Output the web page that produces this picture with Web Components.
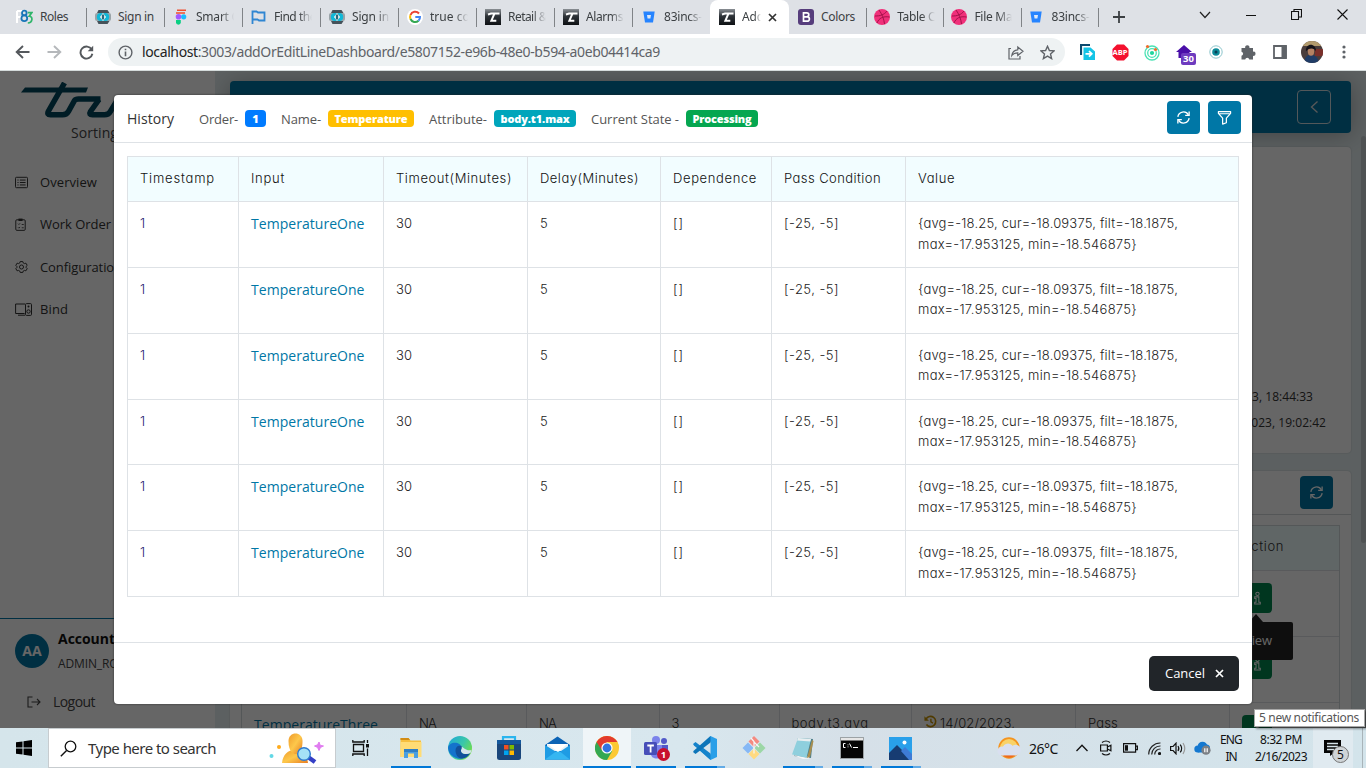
<!DOCTYPE html>
<html lang="en">
<head>
<meta charset="utf-8">
<title>Line Dashboard</title>
<style>
html,body{margin:0;height:100%;overflow:hidden}
body{font-family:"Open Sans","Noto Sans",sans-serif;font-size:13px;color:#222}
</style>
</head>
<body>
<desktop-screen></desktop-screen>
<script>
const svg=(w,h,vb,body)=>`<svg width="${w}" height="${h}" viewBox="${vb}" fill="none">${body}</svg>`;
const ICONS={
 f83:svg(17,16,'0 0 17 16','<path d="M1 2h5M1 2v12M1 8h4" stroke="#fff" stroke-width="2"/><circle cx="8.3" cy="4" r="2.3" stroke="#1976b8" stroke-width="1.8"/><circle cx="8.3" cy="9.3" r="2.9" stroke="#1976b8" stroke-width="1.8"/><path d="M11.8 3.6h4l-2.6 3.6c4 .3 3.6 6.6-1.4 6.8" stroke="#2fb56a" stroke-width="1.7"/>'),
 react:svg(16,16,'0 0 16 16','<rect x="0" y="4" width="16" height="8" rx="2" fill="#9aa3a8"/><path d="M3.500 1h9l2 3H2zM2 12h12.500l-2 3h-9z" fill="#46525a"/><circle cx="5.800" cy="8" r="4" fill="#10b8d8"/><circle cx="10.200" cy="8" r="4" fill="#10b8d8"/><path d="M8 4l3 4-3 4-3-4z" fill="#fff"/><path d="M6.8 5.500h2.400v5H6.800z" fill="#2a6a7c"/>'),
 figma:svg(12,16,'0 0 12 16','<path d="M2 .5h9v1.6H2zM1 3.3h9v1.4H1z" fill="#f04e2e"/><circle cx="3.5" cy="7.8" r="2.8" fill="#a259ff"/><circle cx="8.7" cy="7.8" r="2.6" fill="#1abcfe"/><path d="M1 11h4.8v2.3a2.4 2.4 0 0 1-4.8 0z" fill="#0acf83"/>'),
 flag:svg(15,15,'0 0 15 15','<path d="M1.5 14V1.5h4l1.5 1h6.5v8H8l-1.500-1h-5" stroke="#2f86d2" stroke-width="1.8"/>'),
 google:svg(16,16,'0 0 16 16','<circle cx="8" cy="8" r="8" fill="#fff"/><path d="M12 4.5A5 5 0 0 0 3.5 6" stroke="#ea4335" stroke-width="2"/><path d="M3.5 6a5 5 0 0 0 0 4" stroke="#fbbc05" stroke-width="2"/><path d="M3.500 10a5 5 0 0 0 8 1.700" stroke="#34a853" stroke-width="2"/><path d="M11.500 11.700A5 5 0 0 0 13 8H8.300" stroke="#4285f4" stroke-width="2"/>'),
 zed:svg(16,16,'0 0 16 16','<defs><linearGradient id="z" x2="0" y2="1"><stop stop-color="#8a8f94"/><stop offset=".45" stop-color="#2e3338"/><stop offset="1" stop-color="#0e1114"/></linearGradient></defs><path d="M0 0h16v16H0z" fill="url(#z)"/><path d="M3 5.500l3-1h8.500M9.500 4.500L6.300 11.800h5" stroke="#fff" stroke-width="1.900"/>'),
 bucket:svg(12,12,'0 0 12 12','<path d="M.3.500h11.400L10 11.500H2z" fill="#2684ff"/><path d="M4 4h4l-.6 3.500H4.600z" fill="#dee9f8"/>'),
 boot:svg(16,16,'0 0 16 16','<rect width="16" height="16" rx="3" fill="#563d7c"/><path d="M5.500 3.800h3.300a2 2 0 0 1 0 4H5.500zM5.500 7.800h3.700a2.200 2.200 0 0 1 0 4.400H5.500z" stroke="#fff" stroke-width="1.700"/>'),
 dribbble:svg(16,16,'0 0 16 16','<circle cx="8" cy="8" r="8" fill="#f0307a"/><path d="M1 7c5 0 9-1 12-5M5 1c3 4 5 9 5.500 14M3 14c2-5 6-7 12.500-6" stroke="#a3124a" stroke-width="1"/>'),
 x:svg(9,9,'0 0 9 9','<path d="M1 1l7 7M8 1L1 8" stroke="#333" stroke-width="1.700"/>'),
 plus:svg(12,12,'0 0 12 12','<path d="M6 0v12M0 6h12" stroke="#3c4043" stroke-width="1.800"/>'),
 chev:svg(12,8,'0 0 12 8','<path d="M1 1l5 5.500L11 1" stroke="#222" stroke-width="1.200"/>'),
 min:svg(10,10,'0 0 10 10','<path d="M0 5.500h10" stroke="#111"/>'),
 restore:svg(11,11,'0 0 11 11','<path d="M.5 2.500h7v8h-7zM3 2.500v-2h7.500v7.500H8" stroke="#111" stroke-width="1.100"/>'),
 close:svg(11,11,'0 0 11 11','<path d="M.5.500l10 10M10.500.500l-10 10" stroke="#111" stroke-width="1.100"/>'),
 back:svg(15,14,'0 0 15 14','<path d="M14.500 7H2M8 1L1.700 7 8 13" stroke="#54585c" stroke-width="1.900"/>'),
 fwd:svg(15,14,'0 0 15 14','<path d="M.5 7H13M7 1l6.300 6L7 13" stroke="#b5b8bb" stroke-width="1.900"/>'),
 reload:svg(15,15,'0 0 15 15','<path d="M12.700 4.500A6 6 0 1 0 13.400 8.800" stroke="#54585c" stroke-width="1.900"/><path d="M14.200.800v5.500H8.700z" fill="#54585c"/>'),
 info:svg(15,15,'0 0 15 15','<circle cx="7.500" cy="7.500" r="6.400" stroke="#5f6368" stroke-width="1.400"/><path d="M7.500 6.500v4.700M7.500 3.700v1.600" stroke="#5f6368" stroke-width="1.600"/>'),
 share:svg(16,15,'0 0 16 15','<path d="M3 3.500H1v10.500h11v-3" stroke="#5f6368" stroke-width="1.200"/><path d="M3.800 10.500c.5-4 3-5.500 6-5.700V2L15 6.300l-5.200 4.200V7.800c-2.500 0-4.500.7-6 2.700z" stroke="#5f6368" stroke-width="1.200"/>'),
 star:svg(15,15,'0 0 15 15','<path d="M7.500 1.300l1.900 4.200 4.600.400-3.500 3.100 1.100 4.600-4.100-2.500-4.100 2.500 1.100-4.600L1 5.900l4.600-.400z" stroke="#5f6368" stroke-width="1.400"/>'),
 ext1:svg(16,16,'0 0 16 16','<path d="M1 11V1h9" stroke="#0b4a6f" stroke-width="2.200"/><path d="M3.500 3.500h7l4.500 4V16H3.500z" fill="#14c4e6"/><path d="M5.500 9.800h6M9 7l2.800 2.800L9 12.600" stroke="#fff" stroke-width="1.700"/>'),
 oct:svg(17,17,'0 0 17 17','<path d="M5 .500h7L16.500 5v7L12 16.500H5L.500 12V5z" fill="#f4112e"/>'),
 target:svg(16,17,'0 0 16 17','<circle cx="8" cy="9" r="7" stroke="#4be2b4" stroke-width="1.300"/><circle cx="8" cy="9" r="4.300" stroke="#4be2b4" stroke-width="1.300"/><circle cx="8" cy="9" r="2.100" fill="#20d59c"/><circle cx="3.500" cy="2.500" r="1.600" fill="#f26b2a"/><circle cx="11.500" cy="5.500" r="1.600" fill="#f26b2a"/>'),
 home30:svg(16,14,'0 0 16 14','<path d="M8 0l8 7h-2.500v6h-11V7H0z" fill="#4a0fa8"/>'),
 eye:svg(14,14,'0 0 14 14','<circle cx="7" cy="7" r="6.200" stroke="#8cc5cc" stroke-width="1"/><circle cx="7" cy="7" r="3.800" fill="#0d8b99"/><circle cx="7" cy="7" r="1.500" fill="#073f55"/>'),
 puzzle:svg(16,16,'0 0 16 16','<path d="M1.500 4h3.700a2.200 2.200 0 1 1 4.200 0H13v3.700a2.100 2.100 0 1 1 0 4.100V15.500H9.300a2.100 2.100 0 0 0-4.100 0H1.500v-3.700a2.100 2.100 0 0 0 0-4.100z" fill="#5f6368"/>'),
 panel:svg(14,14,'0 0 14 14','<path d="M1 1h12v12H1z" stroke="#5f6368" stroke-width="1.800"/><path d="M8.500 1h5v12h-5z" fill="#5f6368"/>'),
 avatar:svg(22,22,'0 0 22 22','<defs><clipPath id="a"><circle cx="11" cy="11" r="11"/></clipPath></defs><g clip-path="url(#a)"><path d="M0 0h22v22H0z" fill="#4a3d3c"/><path d="M0 0h22v5H0z" fill="#b29a6c"/><path d="M14 8h8v7h-8z" fill="#7a2f2a"/><path d="M3 22c1-7 3-8 7-8s7 2 8 8z" fill="#203c66"/><ellipse cx="10" cy="10.500" rx="3.200" ry="4.200" fill="#b58263"/><path d="M5 10.500c-1-9 10.500-9 10 0-1-4-8-4-10 0z" fill="#15131a"/></g>'),
 dots:svg(4,14,'0 0 4 14','<g fill="#5f6368"><circle cx="2" cy="2" r="1.600"/><circle cx="2" cy="7" r="1.600"/><circle cx="2" cy="12" r="1.600"/></g>'),
 list:svg(13,13,'0 0 16 16','<rect x=".6" y="1.600" width="14.800" height="12.800" rx="1.200" stroke="currentColor" stroke-width="1.200"/><path d="M6 5h7M6 8h7M6 11h7M3 5h1.400M3 8h1.400M3 11h1.400" stroke="currentColor" stroke-width="1.200"/>'),
 clip:svg(11,13,'0 0 13 16','<rect x=".7" y="2.200" width="11.600" height="13" rx="1.300" stroke="currentColor" stroke-width="1.200"/><path d="M4 .700h5v3H4z" fill="currentColor"/><path d="M3.500 7l1 1 1.500-1.500M8 8h2.500M3.500 11.500l1 1 1.500-1.500M8 12h2.500" stroke="currentColor"/>'),
 gear:svg(13,14,'0 0 16 16','<circle cx="8" cy="8" r="2.500" stroke="currentColor" stroke-width="1.200"/><path d="M6.400 1.300h3.200l.5 1.700 1.500.800 1.800-.500 1.600 2.700-1.300 1.300v1.400l1.300 1.300-1.600 2.700-1.800-.500-1.500.800-.5 1.700H6.400L5.900 13l-1.500-.800-1.800.500L1 10l1.300-1.300V7.300L1 6l1.600-2.700 1.800.500L5.900 3z" stroke="currentColor" stroke-width="1.200" stroke-linejoin="round"/>'),
 bind:svg(17,13,'0 0 17 13','<path d="M10 1H.600v9.500h9M3 12.200h7" stroke="currentColor"/><rect x="10.500" y=".6" width="6" height="11.800" rx="1" stroke="currentColor"/><circle cx="13.500" cy="3.600" r="1" fill="currentColor"/><circle cx="13.500" cy="8.500" r="1.700" stroke="currentColor"/>'),
 logout:svg(14,12,'0 0 14 12','<path d="M5.500 1H1v10h4.500M4.500 6h8.500M10 3l3 3-3 3" stroke="currentColor" stroke-width="1.100"/>'),
 refresh:svg(15,15,'0 0 16 16','<path d="M2 7.300A6 6 0 0 1 13.200 5.200M14 8.700A6 6 0 0 1 2.800 10.800" stroke="currentColor" stroke-width="1.400"/><path d="M14 1.500v4.200H9.800M2 14.500v-4.200h4.200" stroke="currentColor" stroke-width="1.400"/>'),
 funnel:svg(15,15,'0 0 16 16','<path d="M1.500 1.800h13v1.700L10 8.600v5L6 15V8.600L1.500 3.500zM1.800 4h12" stroke="currentColor" stroke-width="1.300" stroke-linejoin="round"/>'),
 left:svg(9,14,'0 0 9 14','<path d="M7.500 1.500L1.500 7l6 5.500" stroke="currentColor" stroke-width="1.300"/>'),
 i:svg(9,14,'0 0 8 12','<circle cx="4" cy="2.300" r="1.500" stroke="#fff" stroke-width=".9"/><path d="M1.500 5h3.700v4.700h1.300v1.700h-5V9.700h1.200V6.500H1.500z" stroke="#fff" stroke-width=".9"/>'),
 hist:svg(13,13,'0 0 16 16','<path d="M2.500 5A6.300 6.300 0 1 1 3 11.700" stroke="#c59100" stroke-width="2"/><path d="M.5 1.500v5.500H6z" fill="#c59100"/><path d="M8.500 4.500V8.500l2.500 1.500" stroke="#c59100" stroke-width="1.700"/>'),
 logo:svg(150,38,'0 0 150 38','<g stroke="#00465c" stroke-linejoin="round"><path d="M0 10.500L4 5.500h63l-2 5z" fill="#00465c" stroke="none"/><path d="M43.500 1L27.500 29q-2 3.800 2 3.800h12q4 0 6-3.500l6-10.800q1-1.500 4-1.500h22" stroke-width="5.500"/><path d="M78 17.500L69.500 29.500q-2 3.300 2 3.300h12q4 0 6-3.500l8-13" stroke-width="5.500"/></g>'),
 win:svg(16,16,'0 0 16 16','<path d="M0 2.300l6.500-.9v6.100H0zM7.500 1.200L16 0v7.500H7.500zM0 8.500h6.500v6.100L0 13.700zM7.500 8.500H16V16l-8.500-1.200z" fill="#000"/>'),
 search:svg(17,17,'0 0 17 17','<circle cx="10.500" cy="6.500" r="5.300" stroke="#111" stroke-width="1.300"/><path d="M6.600 10.400L.8 16.200" stroke="#111" stroke-width="1.400"/>'),
 person:svg(56,32,'0 0 56 32','<defs><linearGradient id="p" x2="1" y2="1"><stop stop-color="#ef9a2b"/><stop offset=".5" stop-color="#fdc84b"/><stop offset="1" stop-color="#e87d22"/></linearGradient></defs><path d="M14 31c1-9 6-13 13-13s12 4 13 13z" fill="url(#p)"/><path d="M20.500 9c0-10 14-10 14 0 0 12-5 13-7 13s-7-2-7-13z" fill="url(#p)"/><path d="M40 25l7 5" stroke="#353fc6" stroke-width="4.500"/><circle cx="36" cy="22" r="6.300" fill="#a5e2f6" stroke="#2f7bd0" stroke-width="1.400"/><path d="M51 10l1.200 3.300L55.500 14l-3 1.400L51 18.500l-1.500-3.100L46.500 14l3.100-1.200z" fill="#e07cf0" stroke="#e07cf0"/><circle cx="11" cy="15" r="2" fill="#ffab1c"/><circle cx="3.500" cy="24" r="2" fill="#63d8e6"/>'),
 taskview:svg(17,16,'0 0 17 16','<path d="M1.500 4.500h10v7h-10zM.8 0v2h11.400V0M.8 16v-2h11.400v2M15.500 0v3M15.500 8.500V16" stroke="#111" stroke-width="1.300"/><path d="M14 4h3v3.500h-3z" fill="#111"/>'),
 folder:svg(22,22,'0 0 22 22','<path d="M.5 1h8l2 2.500H21V20H.500z" fill="#f6bf3e"/><path d="M.5 1h8l1.500 2H.500z" fill="#d28c14"/><path d="M.5 5h21v15H.500z" fill="#ffdc75"/><path d="M4 21v-9h14v9h-4v-4.500H8V21z" fill="#4a9fe0"/><path d="M4 12h14v3H4z" fill="#2f7fc4"/>'),
 edge:svg(24,24,'0 0 24 24','<defs><linearGradient id="e" x2="1" y2=".6"><stop stop-color="#1da6dc"/><stop offset=".6" stop-color="#3ac7a9"/><stop offset="1" stop-color="#70dd4c"/></linearGradient></defs><circle cx="12" cy="12" r="12" fill="url(#e)"/><path d="M0 12C1 5 13 5 13.500 12c-2.500 0-3.500 2-2 4.500 3 3 8 3 11 0A12 12 0 0 1 0 12z" fill="#1473cc"/><path d="M7.500 15c0-4 2-6 6-5 1 1 .5 2 0 3-1.500 5 5 6.500 9 3.500-4 8-14 8.500-15-1.500z" fill="#12519b"/><path d="M13 14c1-1 1-2 .5-3.500 2 1 5 5 10 3.500l-1 3c-4 2-10 1-9.500-3z" fill="#d6e4ec"/>'),
 store:svg(24,26,'0 0 24 26','<path d="M6 7V2.200h12V7" stroke="#2ab5ee" stroke-width="2.200"/><rect y="5" width="24" height="20" rx="2.500" fill="#1a467b"/><path d="M0 5h24v4H0z" fill="#14589d"/><path d="M7 10h4.500v4.500H7z" fill="#f25022"/><path d="M12.500 10H17v4.500h-4.500z" fill="#7fba00"/><path d="M7 15.500h4.500V20H7z" fill="#00a4ef"/><path d="M12.500 15.500H17V20h-4.500z" fill="#ffb900"/>'),
 mail:svg(25,24,'0 0 25 24','<path d="M0 9L12.500.500 25 9v14.500H0z" fill="#0b63b5"/><path d="M2 8h21v7H2z" fill="#e8f2f8"/><path d="M0 9l13 8 12-8v14.500H0z" fill="#1f9ce4"/><path d="M0 23.500L13 14l12 9.500z" fill="#35b6f1"/><path d="M3 8h19l-9 8z" fill="#fff"/>'),
 chrome:svg(24,24,'0 0 24 24','<circle cx="12" cy="12" r="12" fill="#fcc934"/><path d="M12 12H24A12 12 0 0 0 1.600 6z" fill="#fcc934"/><path d="M12 12L1.600 6A12 12 0 0 0 12 24l5.200-9z" fill="#34a853"/><path d="M1.600 6A12 12 0 0 1 22.400 6H12l-5 8.500z" fill="#e33b2e"/><circle cx="12" cy="12" r="5.600" fill="#fff"/><circle cx="12" cy="12" r="4.400" fill="#3474e0"/>'),
 teams:svg(24,24,'0 0 24 24','<circle cx="20" cy="5" r="3" fill="#5059c9"/><path d="M15 9h9v7c0 4-6 4-7 1z" fill="#5059c9"/><circle cx="12" cy="4" r="4" fill="#7b83eb"/><path d="M7 9h11v9c0 6-11 6-11 0z" fill="#7b83eb"/><rect y="6" width="13" height="13" rx="1.500" fill="#464eb8"/><path d="M3.300 9.500h6.600M6.600 9.500v7" stroke="#fff" stroke-width="1.800"/>'),
 code:svg(24,24,'0 0 24 24','<path d="M17.500 0L24 3v18l-6.500 3L5 12.500z" fill="#2a9fe8"/><path d="M17.500 5.500v13L9 12z" fill="#d6e4ec"/><path d="M0 8l2.500-2L17.500 17.500V24L1 9.500z" fill="#1583cb"/><path d="M0 16l2.500 2L17.500 6.500V0L1 14.500z" fill="#0d75b9"/>'),
 git:svg(24,24,'0 0 24 24','<path d="M12 0l5.500 5.500L12 11 6.500 5.500z" fill="#f58a80"/><path d="M6 6.500l5.500 5.500L6 17.500.500 12z" fill="#86b8f5"/><path d="M18 6.500l5.500 5.500-5.500 5.500-5.500-5.500z" fill="#9cd7a6"/><path d="M12 12.500l5.500 5.500-5.500 5.500L6.500 18z" fill="#ffda80"/><path d="M9 2l3 3.500v12M12 6l5 5" stroke="#f4f7f8" stroke-width="1.200"/>'),
 note:svg(24,24,'0 0 24 24','<path d="M7 2l15 1-2 19L3 20z" fill="#4f7f8a"/><path d="M7 2l13 1-4.500 19L1 18.500z" fill="#8ecfdd"/><path d="M7 2l13 1-.6 2.500L6 4.500z" fill="#e8eef0"/><path d="M1 18.500L15.500 22l3-4-.5 4.500L12 23z" fill="#f4f6f7"/><path d="M21 4l1.500 1L19 21l-3 1z" fill="#a98e4d"/>'),
 cmd:svg(24,22,'0 0 24 22','<path d="M.5.500h23v21H.500z" fill="#050505" stroke="#9ca2a5"/><path d="M1 1h22v2.500H1z" fill="#e6e6e6"/><path d="M5.500 6.500H3.500v4h2M8 7.500v.8M8 9.500v.8M9.500 6.500l2 4M13 10.500h5" stroke="#fff" stroke-width="1"/>'),
 photo:svg(23,23,'0 0 23 23','<path d="M0 0h23v23H0z" fill="#29a0ea"/><path d="M0 23V16L8 8l15 15z" fill="#173c72"/><path d="M12 14l4-4 7 7v6H20z" fill="#3e7bd6"/><circle cx="15.500" cy="5.500" r="2" fill="#fff"/>'),
 weather:svg(24,22,'0 0 24 22','<circle cx="12" cy="11" r="9.800" fill="#f9d26a" stroke="#f4941f" stroke-width="1.800"/><path d="M5 17h14c-3 5-11 5-14 0z" fill="#ee6a1e"/><g fill="#d9dff0"><circle cx="5" cy="14" r="4.500"/><circle cx="11" cy="12" r="5.500"/><circle cx="18.500" cy="13" r="5.300"/><rect x="5" y="13" width="14" height="5.400"/></g>'),
 up:svg(12,8,'0 0 12 8','<path d="M.5 7L6 1.200 11.500 7" stroke="#111" stroke-width="1.300"/>'),
 cam:svg(12,16,'0 0 12 16','<path d="M.6 5h6.800v6H.600zM7.400 7l3.500-1.800v5.600L7.400 9M2 2.500q4-3 8 0M2 13.500q4 3 8 0" stroke="#111" stroke-width="1.200"/>'),
 batt:svg(15,10,'0 0 15 10','<path d="M.6.700h12v8.500H.600zM12.600 3.200H14.400v3.500h-1.800" stroke="#111" stroke-width="1.200"/><path d="M2 2.200h3v5.500H2z" fill="#111"/>'),
 wifi:svg(13,13,'0 0 13 13','<path d="M.7 12.500A11.500 11.500 0 0 1 12.500 1M3.700 12.500A8.500 8.500 0 0 1 12.500 4M6.700 12.500a5.500 5.500 0 0 1 5.800-5.500" stroke="#222" stroke-width="1.200"/><circle cx="11.500" cy="11.500" r="1.600" fill="#111"/>'),
 vol:svg(16,13,'0 0 16 13','<path d="M.6 4.500h2.500L6 1.200v10.600L3.100 8.500H.600z" stroke="#111" stroke-width="1.200"/><path d="M8 4q1.700 2.500 0 5M10.200 2.700q3 3.800 0 7.600" stroke="#111" stroke-width="1.200"/><path d="M13 1q3.500 5.500 0 11" stroke="#999" stroke-width="1.200"/>'),
 cloud:svg(17,14,'0 0 17 14','<g fill="#1478d0"><circle cx="3.800" cy="8" r="3.500"/><circle cx="8.500" cy="5.500" r="4.800"/><circle cx="12.500" cy="7" r="3.500"/><path d="M3.800 6h9v5.500h-9z"/></g><circle cx="12" cy="9.200" r="4.600" fill="#7c8085"/><path d="M10.800 7.200v4M13.200 7.200v4" stroke="#fff" stroke-width="1.200"/>'),
 chat:svg(18,16,'0 0 18 16','<path d="M0 0h17v13h-7l-4 3v-3H0z" fill="#050505"/><path d="M3 3.500h11M3 6.500h11M3 9.500h7" stroke="#d5e2e8" stroke-width="1.300"/>')
};
const define=(name,css,html,setup)=>{
 customElements.define(name,class extends HTMLElement{
  connectedCallback(){
   if(this.shadowRoot)return;
   const r=this.attachShadow({mode:'open'});
   const t=document.createElement('template');
   t.innerHTML=`<style>*{box-sizing:border-box}${css}</style>${typeof html==='function'?html(this):html}`;
   r.append(t.content.cloneNode(true));
   if(setup)setup(this,r);
  }
 });
};
const ic=n=>`<ui-icon name="${n}"></ui-icon>`;
const ft=(w,t,a='')=>`<fit-text w="${w}" ${a}>${t}</fit-text>`;

define('ui-icon',':host{display:flex;flex:none;align-items:center;justify-content:center}svg{display:block}',h=>ICONS[h.getAttribute('name')]||'');

define('browser-tab',`:host{display:flex;align-items:center;position:relative;width:78px;height:34px;padding-left:8px;flex:none;font:12px "Noto Sans","Open Sans",sans-serif;color:#3c4043}
 ui-icon{width:17px;margin-right:7px}
 .t{width:38px;overflow:hidden;padding-bottom:1px;-webkit-mask-image:linear-gradient(90deg,#000 65%,transparent)}
 :host([solid]) .t{-webkit-mask-image:none}
 .s{position:absolute;right:-1px;top:8px;width:1px;height:19px;background:#808387}
 :host([active]) .s,:host([nosep]) .s{display:none}
 :host([active]){background:#fff;border-radius:8px 8px 0 0;width:79px}
 :host([active]) .t{width:19px;margin-right:7px}
 :host([active]) .c{width:9px;margin:0}`,
 h=>`${ic(h.getAttribute('icon'))}<div class="t"><slot></slot></div>${h.hasAttribute('active')?'<ui-icon class="c" name="x"></ui-icon>':''}<i class="s"></i>`);

const tab=(icon,w,t,a='')=>`<browser-tab icon="${icon}" ${a}>${ft(w,t)}</browser-tab>`;
define('tab-strip',`:host{display:flex;height:34px;background:#dee1e6;padding-left:8px;overflow:hidden}
 .n{width:77.200px;padding-left:7px}.b{width:77.200px}.w{display:flex;align-items:center;height:29px;flex:1}.w ui-icon{width:46px}.w ui-icon:first-child{width:20px;margin:5px 53px 0 11px}`,
 tab('f83',28,'Roles','solid')+tab('react',36,'Sign in','solid')+tab('figma',43,'Smart C')+tab('flag',42,'Find the')+tab('react',37,'Sign in')+tab('google',43,'true col')+tab('zed',39,'Retail &amp;')+tab('zed',37,'Alarms')+tab('bucket',38,'83incs-','nosep')+tab('zed',22,'Add','active')+
 tab('boot',34,'Colors','solid class="b"')+tab('dribbble',38,'Table C','class="n"')+tab('dribbble',38,'File Ma','class="n"')+tab('bucket',38,'83incs-','class="n"')+
 `<div class="w">${ic('plus')}${ic('chev')}${ic('min')}${ic('restore')}${ic('close')}</div>`);

define('address-bar',`:host{display:flex;align-items:center;height:37px;background:#fff;border-bottom:1px solid #d4dbdb;padding:0 0 0 6px;font:14px "Noto Sans","Open Sans",sans-serif;color:#5f6368}
 .nav{width:32px}.o{display:flex;align-items:center;width:957px;height:28px;border-radius:14px;background:#eef2f3;margin-left:6px;padding:0 10px;gap:8px}
 .o fit-text{margin:-1px 0 0 1px}
 .o b{font-weight:400;color:#222}.o .sp{flex:1}.o .st{margin-left:8px}
 .e{width:32px;height:28px;position:relative;display:flex;align-items:center;justify-content:center}.r{display:flex;margin-left:7px}
 .bd{position:absolute;left:13px;top:15px;background:#6e3bbf;color:#fff;font:bold 9.500px/12px "Open Sans",sans-serif;padding:0 2px;border-radius:2px}
 .ab{position:absolute;left:0;right:0;top:6px;text-align:center;color:#fff;font:bold 7.500px/17px "Open Sans",sans-serif}`,
 `<ui-icon class="nav" name="back"></ui-icon><ui-icon class="nav" name="fwd"></ui-icon><ui-icon class="nav" name="reload"></ui-icon>
 <div class="o">${ic('info')}${ft(518,'<b>localhost</b>:3003/addOrEditLineDashboard/e5807152-e96b-48e0-b594-a0eb04414ca9')}<span class="sp"></span>${ic('share')}<ui-icon class="st" name="star"></ui-icon></div>
 <div class="r"><div class="e">${ic('ext1')}</div><div class="e">${ic('oct')}<span class="ab">ABP</span></div><div class="e">${ic('target')}</div><div class="e">${ic('home30')}<span class="bd">30</span></div><div class="e">${ic('eye')}</div><div class="e">${ic('puzzle')}</div><div class="e">${ic('panel')}</div><div class="e">${ic('avatar')}</div><div class="e">${ic('dots')}</div></div>`);

define('nav-item',':host{display:flex;align-items:center;height:42.300px;color:#333;padding-left:15px}ui-icon{justify-content:flex-start;width:25px}',
 h=>`${ic(h.getAttribute('icon'))}<slot></slot>`);

define('side-bar',`:host{display:flex;flex-direction:column;width:215px;height:657px;background:#fff;flex:none;font-size:13px;color:#444}
 .l{padding:11px 0 0 21px;height:51px}.l ui-icon{justify-content:flex-start}.s{padding-left:71px;font-size:14px;line-height:22px;height:39px}
 .sp{flex:1}.u{border-top:1px solid #0077a6;height:110px;padding-top:11px}
 .a{display:flex;padding-left:15px;align-items:center}.c{width:34px;height:34px;border-radius:50%;background:#0077a6;color:#fff;font:bold 14px/34px "Open Sans";text-align:center;margin-right:9px}
 .n b{display:block;font-size:14px;line-height:18px;color:#111}.n span{display:block;font-size:12px;margin-top:8px;line-height:16px}
 .o{display:flex;align-items:center;padding:20px 0 0 27px;gap:12px;font-size:14px}`,
 `<div class="l">${ic('logo')}</div><div class="s">${ft(47,'Sorting')}</div>
 <nav><nav-item icon="list">${ft(57,'Overview')}</nav-item><nav-item icon="clip">${ft(71,'Work Order')}</nav-item><nav-item icon="gear">${ft(82,'Configuration')}</nav-item><nav-item icon="bind">${ft(28,'Bind')}</nav-item></nav>
 <div class="sp"></div><div class="u"><div class="a"><div class="c">AA</div><div class="n"><b>${ft(57,'Account')}</b><span>${ft(73,'ADMIN_ROLE')}</span></div></div><div class="o">${ic('logout')}${ft(42,'Logout')}</div></div>`);

const POP='font-family:Inter,"Open Sans",sans-serif;font-weight:300;font-feature-settings:"cv11","calt" 0;';
define('square-button',':host{display:flex;width:33px;height:33px;border-radius:4px;background:#0077a6;color:#fff;align-items:center;justify-content:center;flex:none}',h=>ic(h.getAttribute('icon')));

define('dashboard-page',`:host{display:block;flex:1;min-width:0;height:657px;overflow:hidden;background:#e7f1f3;padding:10px 15px 0;position:relative;font-size:13px;color:#333}
 .h{height:52px;border-radius:4px;background:#0077a6;display:flex;justify-content:flex-end;align-items:center;padding-right:20px;box-shadow:0 2px 24px rgba(0,0,0,.3)}
 .h div{width:34px;height:34px;border:1px solid #d0dde2;border-radius:4px;display:flex;align-items:center;justify-content:center;color:#ddd}
 .c{background:#fff;border-radius:4px;margin-top:14px;box-shadow:0 0 2px rgba(0,0,0,.2)}
 .c1{height:306px;display:flex;flex-direction:column;align-items:flex-end;padding:237px 25px 0 0;line-height:26px;font-size:12px}
 .c1 :first-child{margin-right:13px}
 .c2{margin-top:18px;height:400px}.ch{height:44px;border-bottom:1px solid #d3d8da;display:flex;justify-content:flex-end;align-items:center;padding:0 18px 1px 0}
 .t{margin:10px 11px;border:1px solid #d3dadd;border-bottom:0;width:1099px}
 .r{display:grid;grid-template-columns:165px 120px 132.500px 120px 132.500px 164px 154px 1fr;height:65.800px;border-bottom:1px solid #dee2e6;${POP}font-size:13px}
 .r.hd{height:45px;background:#f0feff}.r>div{border-right:1px solid #dee2e6;padding:12px 12px 0}.r>div:last-child{border-right:0}
 .g{width:30px;height:30px;background:#00874f;border-radius:4px;display:flex;align-items:center;justify-content:center}
 .r a{font:14px/20px "Open Sans";color:#0077a6}.d{display:flex;gap:3px;align-items:flex-start}
 .tip{position:absolute;left:1000px;top:551px;width:78px;height:38px;background:#232323;color:#fff;font-size:13px;line-height:36px;padding-left:29px;border-radius:2px}
 .tip:before{content:"";position:absolute;left:34px;top:-8px;border:7px solid transparent;border-top:0;border-bottom-color:#232323;border-bottom-width:8px}
 .sb{position:absolute;right:0;top:65px;width:5px;height:407px;background:#c6ced0;border-radius:3px}`,
 ()=>{const e='<div></div>'.repeat(7);return `<div class="h"><div>${ic('left')}</div></div>
 <div class="c c1">${ft(118,'14/02/2023, 18:44:33')}${ft(118,'14/02/2023, 19:02:42')}</div>
 <div class="c c2"><div class="ch"><square-button icon="refresh"></square-button></div>
 <div class="t"><div class="r hd">${e}<div>${ft(42,'Action')}</div></div>
 <div class="r">${e}<div><div class="g">${ic('i')}</div></div></div>
 <div class="r">${e}<div><div class="g">${ic('i')}</div></div></div>
 <div class="r"><div><a>${ft(124,'TemperatureThree')}</a></div><div>${ft(17,'NA')}</div><div>${ft(17,'NA')}</div><div>3</div><div>${ft(77,'body.t3.avg')}</div><div class="d">${ic('hist')}${ft(75,'14/02/2023,')}</div><div>${ft(30,'Pass')}</div><div><div class="g">${ic('i')}</div></div></div></div></div>
 <div class="tip">${ft(28,'View')}</div><i class="sb"></i>`});

define('state-badge',':host{display:block;height:17px;border-radius:4px;color:#fff;font:800 11px/18px "Open Sans",sans-serif;padding:0 6.500px;background:var(--c)}','<slot></slot>');

const COLS=[['Timestamp',75],['Input',34],['Timeout(Minutes)',116],['Delay(Minutes)',99],['Dependence',84],['Pass Condition',97],['Value',37]];
define('history-table',`:host{display:block;border:1px solid #dee2e6;width:1112px;color:#222;${POP}font-size:13px}
 .r{display:grid;grid-template-columns:111px 145px 144px 133px 111px 134px 1fr;height:65.850px;border-top:1px solid #dee2e6}
 .r:first-of-type{height:44px;border:0;background:#f2fdff;color:#111}.r>div{border-right:1px solid #dee2e6;padding:11px 12px;line-height:20.500px}.r>div:last-child{border:0}
 a{display:block;margin-top:1px;font:14px/20px "Open Sans";color:#0077a6}`,
 ()=>`<div class="r">${COLS.map(c=>`<div>${ft(c[1],c[0])}</div>`).join('')}</div>`+
 `<div class="r"><div><span style="color:#282070">1</span></div><div><a>${ft(113.5,'TemperatureOne')}</a></div><div>${ft(16,'30')}</div><div>5</div><div>${ft(11,'[]')}</div><div>${ft(55,'[-25, -5]')}</div><div>${ft(260,'{avg=-18.25, cur=-18.09375, filt=-18.1875,')}<br>${ft(219,'max=-17.953125, min=-18.546875}')}</div></div>`.repeat(6));

define('history-dialog',`:host{display:flex;flex-direction:column;width:1138px;height:609px;background:#fff;border-radius:4px;color:#555;box-shadow:0 0 2px #222}
 header{display:flex;align-items:center;height:48px;border-bottom:1px solid #dee2e6;padding:0 11px 0 13px;flex:none}
 header .ti{font-size:14px;color:#333;width:72px}header .l{margin-right:7px}header state-badge{margin-right:15px}
 header .sp{flex:1}square-button+square-button{margin-left:8px}header square-button{margin-bottom:2px}
 main{padding:13px;flex:1}footer{height:62px;border-top:1px solid #dee2e6;display:flex;justify-content:flex-end;padding:13px 13px 0}
 button{font:13px "Open Sans";background:#212529;color:#fff;border:0;border-radius:5px;width:90px;height:35px;display:flex;align-items:center;padding:0 15px 1px 16px;justify-content:space-between}
 button ui-icon{filter:brightness(6)}`,
 `<header><span class="ti">${ft(47,'History')}</span>
 <span class="l">${ft(39,'Order-')}</span><state-badge style="--c:#007bff;width:21px;padding:0;text-align:center">1</state-badge>
 <span class="l">${ft(40,'Name-')}</span><state-badge style="--c:#ffbf00">${ft(73,'Temperature')}</state-badge>
 <span class="l">${ft(58,'Attribute-')}</span><state-badge style="--c:#00a5bb">${ft(69,'body.t1.max')}</state-badge>
 <span class="l">${ft(88,'Current State -')}</span><state-badge style="--c:#05a650">${ft(59,'Processing')}</state-badge>
 <span class="sp"></span><square-button icon="refresh"></square-button><square-button icon="funnel"></square-button></header>
 <main><history-table></history-table></main>
 <footer><button>${ft(40,'Cancel')}${ic('x')}</button></footer>`);

define('web-viewport',`:host{display:flex;position:relative;height:657px;overflow:hidden}
 .o{position:absolute;inset:0;background:rgba(0,0,0,.6);display:flex;align-items:flex-start;padding:24px 114px}`,
 '<side-bar></side-bar><dashboard-page></dashboard-page><div class="o"><history-dialog></history-dialog></div>');

define('task-button',`:host{display:flex;width:49px;height:40px;align-items:center;justify-content:center;position:relative;flex:none}
 :host([on])::before,:host([many])::before{content:"";position:absolute;bottom:0;left:5px;width:40px;height:2px;background:#0078d7}
 :host([many])::before{background:linear-gradient(90deg,#0078d7 32px,#62abe6 32px)}
 :host([focus]){background:#eff5f8}:host([focus])::before{left:0;width:48px}`,
 h=>`${ic(h.getAttribute('icon'))}<slot></slot>`);

define('task-bar',`:host{display:flex;height:40px;background:linear-gradient(90deg,#d5e5eb,#d8e7ee 50%,#d6e0e8 62%,#d3e4eb);align-items:center;position:relative;font:12px "Noto Sans","Open Sans",sans-serif;color:#111}
 .w{width:48px}.s{width:288px;height:40px;background:#fff;border:1px solid #c7cccf;display:flex;align-items:center;padding-left:11px;font-size:15px;color:#333}
 .s fit-text{margin-left:11px}.s .p{margin-left:52px}.tv{width:48px;margin-right:2px}
 .tm{position:absolute;left:20px;top:20px;width:13px;height:13px;border-radius:50%;background:#c8102e;color:#fff;font:bold 9.500px/13px "Open Sans";text-align:center}
 .ch{width:48px;margin-left:1px}
 .g{flex:1}.tray{display:flex;align-items:center;margin-left:12px}.tray ui-icon{width:24px}
 .wt{display:flex;align-items:center;gap:8px;font-size:14px}
 .k{text-align:center;line-height:17px;display:flex;flex-direction:column;align-items:center}
 .nt{width:40px;height:40px;background:#e0eaf0;margin:0 9px 0 6px;display:flex;align-items:center;justify-content:center;position:relative}
 .nt span{position:absolute;left:19px;top:18px;width:17px;height:17px;border-radius:50%;border:1px solid #777;background:#cfd4d7;font:12px/15px "Noto Sans";text-align:center}
 .ed{width:4px;height:40px;border-left:1px solid #a9b4b9}
 .tip{position:absolute;right:1px;top:-19px;width:111px;height:18px;background:#fff;border:1px solid #a8a8a8;font:12px/15px "Noto Sans";color:#575757;padding-left:4px;box-shadow:2px 2px 2px rgba(0,0,0,.4)}`,
 `<ui-icon class="w" name="win"></ui-icon><div class="s">${ic('search')}${ft(128,'Type here to search')}<ui-icon class="p" name="person"></ui-icon></div><ui-icon class="tv" name="taskview"></ui-icon>
 <task-button icon="folder" on></task-button><task-button icon="edge"></task-button><task-button icon="store"></task-button><task-button icon="mail"></task-button><task-button icon="chrome" on focus class="ch"></task-button><task-button icon="teams" on><span class="tm" style="left:26px">1</span></task-button><task-button icon="code" many></task-button><task-button icon="git"></task-button><task-button icon="note" many></task-button><task-button icon="cmd" many></task-button><task-button icon="photo" many></task-button>
 <span class="g"></span><div class="wt">${ic('weather')}${ft(29,'26°C')}</div>
 <div class="tray">${ic('up')}${ic('cam')}${ic('batt')}${ic('wifi')}${ic('vol')}${ic('cloud')}</div>
 <div class="k" style="margin-left:6px">${ft(22,'ENG')}${ft(11,'IN')}</div><div class="k" style="margin-left:13px">${ft(42,'8:32 PM')}${ft(52,'2/16/2023')}</div>
 <div class="nt">${ic('chat')}<span>5</span></div><i class="ed"></i><div class="tip">${ft(100,'5 new notifications')}</div>`);

define('desktop-screen',':host{display:flex;flex-direction:column;width:1366px;height:768px;overflow:hidden;background:#fff}',
 '<tab-strip></tab-strip><address-bar></address-bar><web-viewport></web-viewport><task-bar></task-bar>');

/* Spreads its text over a given width by adjusting the letter spacing. */
define('fit-text',':host{display:inline-block;white-space:pre;flex:none}','<slot></slot>',h=>{
 const w=+h.getAttribute('w'),n=h.textContent.length,cur=h.getBoundingClientRect().width;
 h.style.letterSpacing=((w-cur)/n).toFixed(3)+'px';
});
</script>
</body>
</html>
